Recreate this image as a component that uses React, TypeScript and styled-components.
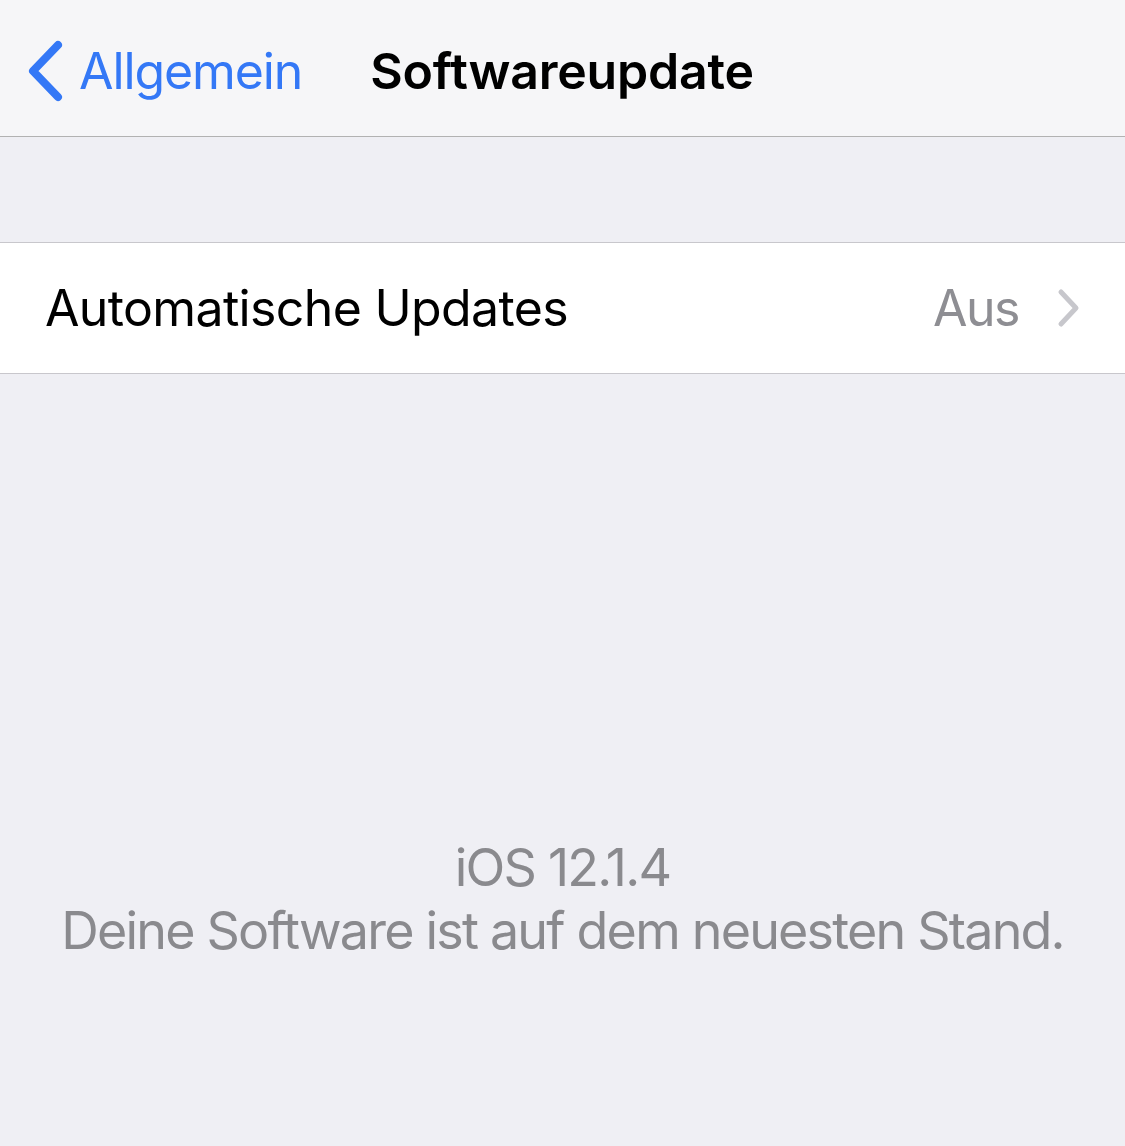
import React from "react";
import styled, { createGlobalStyle } from "styled-components";

const Global = createGlobalStyle`
  html, body { margin: 0; padding: 0; background: #efeff4; }
  body { font-family: Inter, "Noto Sans", sans-serif; -webkit-font-smoothing: antialiased; }
  #root { min-height: 1146px; }
`;

const Screen = styled.div`
  display: flex;
  flex-direction: column;
  width: 1125px;
  height: 1146px;
  background: #efeff4;
  overflow: hidden;
`;

const NavBar = styled.header`
  display: flex;
  align-items: center;
  height: 137px;
  padding: 6px 0 0 27px;
  box-sizing: border-box;
  background: #f6f6f8;
  border-bottom: 1px solid #b2b2b2;
  flex: none;
`;

const BackButton = styled.button`
  display: flex;
  align-items: center;
  gap: 16px;
  padding: 0;
  border: 0;
  background: none;
  color: #3478f6;
  font-family: Inter, sans-serif;
  font-size: 50px;
  font-weight: 400;
  letter-spacing: -1.1px;
  cursor: pointer;
`;

const Title = styled.h1`
  margin: 0 0 0 68px;
  font-size: 50px;
  font-weight: 600;
  color: #000;
  letter-spacing: -0.2px;
`;

const Spacer = styled.div<{ $h: number }>`
  height: ${(p) => p.$h}px;
  flex: none;
`;

const Group = styled.section`
  background: #fff;
  border-top: 1px solid #c8c7cc;
  border-bottom: 1px solid #c8c7cc;
  flex: none;
`;

const Row = styled.div`
  display: flex;
  align-items: center;
  height: 130px;
  padding: 0 44px 0 45px;
`;

const Label = styled.span`
  flex: 1;
  font-size: 50px;
  color: #000;
  letter-spacing: -0.65px;
`;

const Value = styled.span`
  font-size: 50px;
  color: #8e8e93;
  letter-spacing: -1.5px;
  margin-right: 38px;
`;

const Footer = styled.div`
  flex: 1;
  display: flex;
  flex-direction: column;
  align-items: center;
  padding-top: 462px;
  color: #8a8a8e;
  font-size: 52px;
  line-height: 63px;
  letter-spacing: -1.8px;
`;

const BackChevron = () => (
  <svg width="36" height="62" viewBox="0 0 36 62" fill="none">
    <path d="M31 5 L6 31 L31 57" stroke="#3478f6" strokeWidth="8" strokeLinecap="round" strokeLinejoin="round" />
  </svg>
);

const Disclosure = () => (
  <svg width="24" height="40" viewBox="0 0 24 40" fill="none">
    <path d="M4 4 L19 20 L4 36" stroke="#c7c7cc" strokeWidth="5" strokeLinecap="round" strokeLinejoin="round" />
  </svg>
);

export default function App() {
  return (
    <Screen>
      <Global />
      <NavBar>
        <BackButton>
          <BackChevron />
          Allgemein
        </BackButton>
        <Title>Softwareupdate</Title>
      </NavBar>
      <Spacer $h={105} />
      <Group>
        <Row>
          <Label>Automatische Updates</Label>
          <Value>Aus</Value>
          <Disclosure />
        </Row>
      </Group>
      <Footer>
        <span>iOS 12.1.4</span>
        <span>Deine Software ist auf dem neuesten Stand.</span>
      </Footer>
    </Screen>
  );
}
